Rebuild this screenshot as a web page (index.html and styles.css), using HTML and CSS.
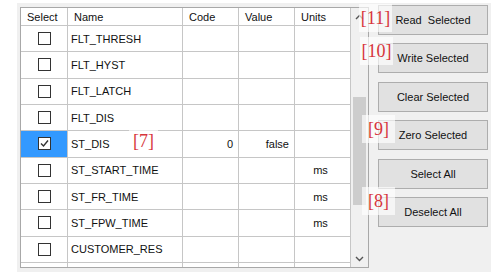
FILE: index.html
```html
<!DOCTYPE html>
<html lang="en">
<head>
    <meta charset="UTF-8">
    <meta name="viewport" content="width=device-width, initial-scale=1.0">
    <title>Parameters</title>
    <link rel="stylesheet" href="styles.css">
</head>
<body>
    <div class="page">
        <div class="panel">
            <div class="grid">
                <div class="rows">
                    <div class="row head">
                        <div class="cell">Select</div>
                        <div class="cell">Name</div>
                        <div class="cell">Code</div>
                        <div class="cell">Value</div>
                        <div class="cell">Units</div>
                    </div>
                    <div class="row">
                        <div class="cell check"><span class="box"></span></div>
                        <div class="cell name">FLT_THRESH</div>
                        <div class="cell num"></div>
                        <div class="cell num"></div>
                        <div class="cell unit"></div>
                    </div>
                    <div class="row">
                        <div class="cell check"><span class="box"></span></div>
                        <div class="cell name">FLT_HYST</div>
                        <div class="cell num"></div>
                        <div class="cell num"></div>
                        <div class="cell unit"></div>
                    </div>
                    <div class="row">
                        <div class="cell check"><span class="box"></span></div>
                        <div class="cell name">FLT_LATCH</div>
                        <div class="cell num"></div>
                        <div class="cell num"></div>
                        <div class="cell unit"></div>
                    </div>
                    <div class="row">
                        <div class="cell check"><span class="box"></span></div>
                        <div class="cell name">FLT_DIS</div>
                        <div class="cell num"></div>
                        <div class="cell num"></div>
                        <div class="cell unit"></div>
                    </div>
                    <div class="row">
                        <div class="cell check selected">
                            <span class="box">
                                <svg width="11" height="11" viewBox="0 0 11 11"><path d="M2 5.5 L4.5 8 L9 2.5" fill="none" stroke="#333" stroke-width="1.4"/></svg>
                            </span>
                        </div>
                        <div class="cell name">ST_DIS</div>
                        <div class="cell num">0</div>
                        <div class="cell num">false</div>
                        <div class="cell unit"></div>
                    </div>
                    <div class="row">
                        <div class="cell check"><span class="box"></span></div>
                        <div class="cell name">ST_START_TIME</div>
                        <div class="cell num"></div>
                        <div class="cell num"></div>
                        <div class="cell unit">ms</div>
                    </div>
                    <div class="row">
                        <div class="cell check"><span class="box"></span></div>
                        <div class="cell name">ST_FR_TIME</div>
                        <div class="cell num"></div>
                        <div class="cell num"></div>
                        <div class="cell unit">ms</div>
                    </div>
                    <div class="row">
                        <div class="cell check"><span class="box"></span></div>
                        <div class="cell name">ST_FPW_TIME</div>
                        <div class="cell num"></div>
                        <div class="cell num"></div>
                        <div class="cell unit">ms</div>
                    </div>
                    <div class="row">
                        <div class="cell check"><span class="box"></span></div>
                        <div class="cell name">CUSTOMER_RES</div>
                        <div class="cell num"></div>
                        <div class="cell num"></div>
                        <div class="cell unit"></div>
                    </div>
                    <div class="row tail">
                        <div class="cell"></div>
                        <div class="cell"></div>
                        <div class="cell"></div>
                        <div class="cell"></div>
                        <div class="cell"></div>
                    </div>
                </div>

                <div class="scrollbar">
                    <div class="arrow">
                        <svg width="9" height="6" viewBox="0 0 9 6"><path d="M1 5 L4.5 1.5 L8 5" fill="none" stroke="#555" stroke-width="1.4"/></svg>
                    </div>
                    <div class="track"><div class="thumb"></div></div>
                    <div class="arrow">
                        <svg width="9" height="6" viewBox="0 0 9 6"><path d="M1 1 L4.5 4.5 L8 1" fill="none" stroke="#555" stroke-width="1.4"/></svg>
                    </div>
                </div>
            </div>

            <div class="actions">
                <button class="action">Read&nbsp; Selected</button>
                <button class="action">Write Selected</button>
                <button class="action">Clear Selected</button>
                <button class="action">Zero Selected</button>
                <button class="action">Select All</button>
                <button class="action">Deselect All</button>
            </div>
        </div>

        <span class="tag tag-11">[11]</span>
        <span class="tag tag-10">[10]</span>
        <span class="tag tag-9">[9]</span>
        <span class="tag tag-8">[8]</span>
        <span class="tag tag-7">[7]</span>
    </div>
</body>
</html>
```

FILE: styles.css
```css
body {
    margin: 0;
    background-color: #ffffff;
    font-family: "Liberation Sans", Arial, sans-serif;
    font-size: 11px;
    color: #111;
}

.page {
    position: relative;
    width: 500px;
    height: 280px;
    padding: 3px 0 0 17px;
    box-sizing: border-box;
}

.panel {
    display: flex;
    gap: 9px;
    width: 474px;
    height: 269px;
    padding: 2px 3px 0 3px;
    box-sizing: border-box;
    background-color: #f0f0f0;
}

.grid {
    display: flex;
    width: 349px;
    height: 261px;
    margin-top: 2px;
    border: 1px solid #a8a8a8;
    box-sizing: border-box;
    background-color: #ffffff;
}

.rows {
    display: flex;
    flex-direction: column;
    width: 330px;
}

.row {
    display: grid;
    grid-template-columns: 47px 115px 56px 56px 56px;
    height: 26.33px;
    flex-shrink: 0;
}

.row.head {
    height: 18px;
}

.row.tail {
    flex: 1;
    height: auto;
}

.cell {
    display: flex;
    align-items: center;
    min-width: 0;
    border-right: 1px solid #c6c6c6;
    border-bottom: 1px solid #c6c6c6;
    box-sizing: border-box;
    white-space: nowrap;
    overflow: hidden;
}

.head .cell {
    padding-left: 6px;
}

.tail .cell {
    border-bottom: none;
}

.name {
    padding-left: 3px;
}

.num {
    justify-content: flex-end;
    padding-right: 5px;
}

.unit {
    justify-content: center;
    padding-right: 4px;
}

.check {
    justify-content: center;
}

.check.selected {
    background-color: #3399ff;
}

.box {
    display: flex;
    align-items: center;
    justify-content: center;
    width: 13px;
    height: 13px;
    border: 1px solid #333;
    box-sizing: border-box;
    background-color: #ffffff;
}

.scrollbar {
    display: flex;
    flex-direction: column;
    width: 17px;
    background-color: #f0f0f0;
}

.arrow {
    display: flex;
    align-items: center;
    justify-content: center;
    height: 17px;
}

.track {
    flex: 1;
    padding: 72px 2px 0 2px;
}

.thumb {
    height: 108px;
    background-color: #cdcdcd;
}

.actions {
    display: flex;
    flex-direction: column;
    gap: 8.4px;
}

.action {
    width: 110px;
    height: 30px;
    padding: 0;
    background-color: #e1e1e1;
    border: 1px solid #adadad;
    font-family: inherit;
    font-size: 11px;
    color: #111;
}

.tag {
    position: absolute;
    display: flex;
    align-items: center;
    justify-content: center;
    width: 33px;
    height: 28px;
    background-color: rgba(255, 255, 255, 0.65);
    font-family: "Liberation Serif", "Times New Roman", serif;
    font-size: 18px;
    color: #d7353c;
}

.tag-11 { left: 359px; top: 4px; }
.tag-10 { left: 360px; top: 37px; }
.tag-9 { left: 362px; top: 115px; }
.tag-8 { left: 362px; top: 187px; }
.tag-7 { left: 129px; top: 129px; width: 29px; height: 24px; }
```
